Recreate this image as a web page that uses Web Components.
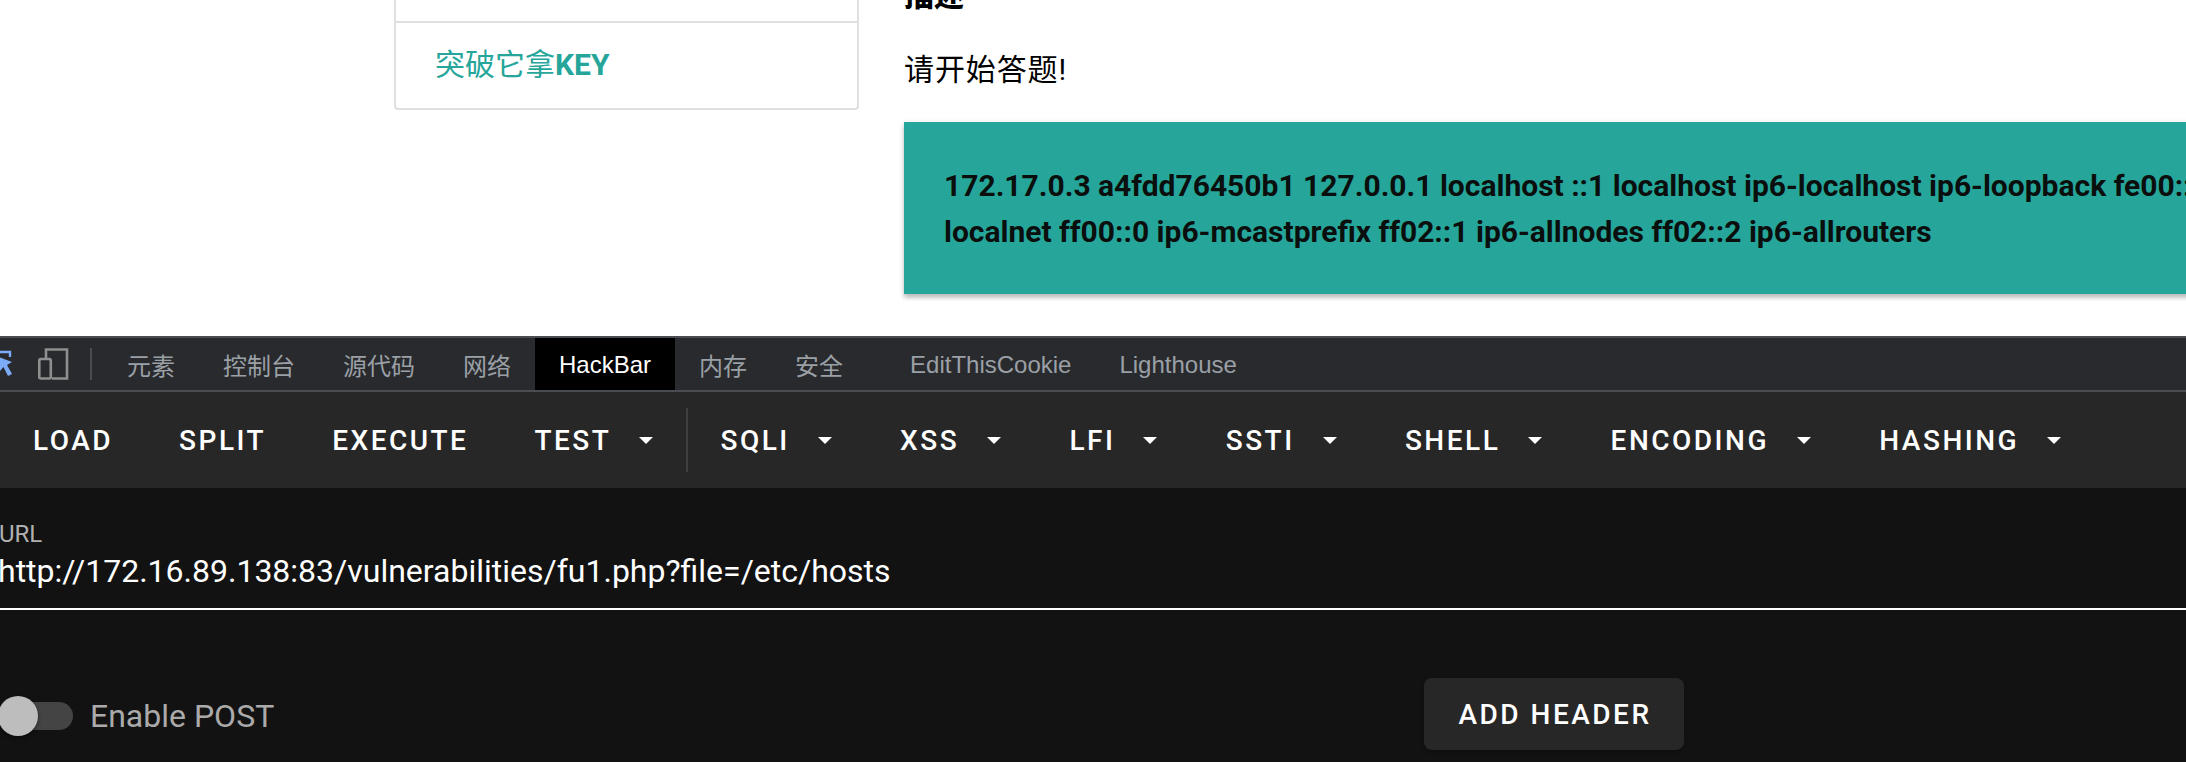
<!DOCTYPE html>
<html lang="zh"><head><meta charset="utf-8"><title>HackBar</title>
<style>
html,body{margin:0;padding:0;width:2186px;height:762px;overflow:hidden;background:#fff}
body{display:flex;flex-direction:column;font-family:Roboto,"Noto Sans CJK SC",sans-serif}
</style></head><body>
<site-area>
  <side-menu><span>突破它拿<b>KEY</b></span></side-menu>
  <task-panel>
    <strong slot="title">描述</strong>
    <span slot="lead">请开始答题!</span>
    172.17.0.3 a4fdd76450b1 127.0.0.1 localhost ::1 localhost ip6-localhost ip6-loopback fe00::0 ip6-<br>localnet ff00::0 ip6-mcastprefix ff02::1 ip6-allnodes ff02::2 ip6-allrouters
  </task-panel>
</site-area>
<dev-tools>
  <dev-tabs></dev-tabs>
  <hack-toolbar>
    <hack-btn>LOAD</hack-btn><hack-btn>SPLIT</hack-btn><hack-btn>EXECUTE</hack-btn><hack-btn menu>TEST</hack-btn>
    <tool-sep></tool-sep>
    <hack-btn menu wide>SQLI</hack-btn><hack-btn menu wide>XSS</hack-btn><hack-btn menu wide>LFI</hack-btn><hack-btn menu wide>SSTI</hack-btn><hack-btn menu wide>SHELL</hack-btn><hack-btn menu wide>ENCODING</hack-btn><hack-btn menu wide>HASHING</hack-btn>
  </hack-toolbar>
  <hack-form></hack-form>
</dev-tools>
<script>
function def(name, html, init){
  customElements.define(name, class extends HTMLElement{
    constructor(){super();this.attachShadow({mode:'open'}).innerHTML=html;}
    connectedCallback(){if(init)init(this);}
  });
}
def('site-area',`<style>
:host{display:flex;height:336px;flex:none;overflow:hidden;background:#fff;padding-left:394px;box-sizing:border-box;align-items:flex-start;color:#000}
</style><slot></slot>`);
def('side-menu',`<style>
:host{display:block;width:465px;flex:none;margin-right:45px;box-sizing:border-box;border:2px solid #e0e0e0;border-top:0;border-radius:0 0 4px 4px;color:#26a69a;font-size:30px;line-height:45px}
.a{height:21px;border-bottom:2px solid #e0e0e0}
.b{height:85px;box-sizing:border-box;padding:0 0 2px 39px;display:flex;align-items:center}
</style><div class="a"></div><div class="b"><slot></slot></div>`);
def('task-panel',`<style>
:host{display:block;width:1400px;flex:none;font-size:30px;line-height:45px;margin-top:-27px}
.t{display:block;height:66px;font-weight:700}
.l{display:block;height:75px;padding-top:8px;box-sizing:content-box;letter-spacing:.9px}
.box{background:#26a69a;padding:41px 40px 40px;line-height:46px;font-weight:700;color:#0a0f0e;box-shadow:0 4px 4px rgba(0,0,0,.2),0 1px 6px rgba(0,0,0,.12);white-space:nowrap;height:91px}
</style><div class="t"><slot name="title"></slot></div><div class="l"><slot name="lead"></slot></div><div class="box"><slot></slot></div>`);
def('dev-tools',`<style>:host{display:flex;flex-direction:column;flex:1;background:#121212;overflow:hidden}</style><slot></slot>`);
def('dev-tabs',`<style>
:host{display:flex;flex:none;height:52px;background:#292a2d;border-top:2px solid #494c50;border-bottom:2px solid #494c50;font:24px "Liberation Sans","Noto Sans CJK SC",sans-serif;color:#9aa0a6;align-items:stretch}
.ic{width:103px;flex:none;display:block}
.t{padding:1px 24px 0;display:flex;align-items:center;white-space:nowrap}
.on{background:#000;color:#fff}
.x{margin-left:19px}
</style>
<svg class="ic" width="103" height="52" viewBox="0 0 103 52" aria-hidden="true">
  <path d="M-4 14H10V19" fill="none" stroke="#7cacf8" stroke-width="2.4"/>
  <path d="M-1 19L12 24L7 27L12 36L8 38L3.500 29L0 33Z" fill="#7cacf8"/>
  <path d="M46 20V11.500H67V40.500H52" fill="none" stroke="#8f8f8f" stroke-width="2.600"/>
  <rect x="39.300" y="21" width="11.500" height="19.500" rx="1.500" fill="none" stroke="#8f8f8f" stroke-width="2.600"/>
  <rect x="90" y="10" width="2" height="32" fill="#494c50"/>
</svg>
<div class="t">元素</div><div class="t">控制台</div><div class="t">源代码</div><div class="t">网络</div><div class="t on">HackBar</div><div class="t">内存</div><div class="t">安全</div><div class="t x">EditThisCookie</div><div class="t">Lighthouse</div>`);
def('hack-toolbar',`<style>
:host{display:flex;flex:none;height:96px;background:#272727;align-items:center;box-sizing:border-box}
</style><slot></slot>`);
def('hack-btn',`<style>
:host{display:flex;flex:none;align-items:center;height:72px;padding:0 33px;font:500 28px Roboto,sans-serif;letter-spacing:2.5px;color:#fff;white-space:nowrap}
:host([wide]){padding:0 33.65px}
.c{display:none;width:0;height:0;border-left:7px solid transparent;border-right:7px solid transparent;border-top:7px solid #fff;margin-left:28px;margin-right:1px}
:host([menu]) .c{display:block}
</style><slot></slot><i class="c"></i>`);
def('tool-sep',`<style>:host{display:block;flex:none;width:2px;height:64px;background:#3f3f3f;margin:0 -1.5px 0 -1px}</style>`);
def('hack-form',`<style>
:host{display:block;flex:1;background:#121212;position:relative;font-family:Roboto,sans-serif;overflow:hidden}
.f{height:122px;box-sizing:border-box;border-bottom:2px solid #fff;margin-left:-1px;padding-top:32px}
.lab{font-size:24px;line-height:28px;color:#b0b0b0}
.val{font-size:32px;line-height:48px;color:#fff;margin:-1px 0 0 -1px}
.row{display:flex;align-items:center;margin-top:68px;height:72px}
.left{width:1424px;display:flex;align-items:center;flex:none;margin-top:4px}
.sw{width:73px;height:40px;position:relative;flex:none;margin-left:-2px;margin-right:19px}
.tr{display:block;margin:6px 0 0 20px;width:55px;height:28px;border-radius:0 14px 14px 0;background:#444}
.th{position:absolute;left:0;top:0;width:40px;height:40px;border-radius:50%;background:#bdbdbd;box-shadow:0 2px 4px rgba(0,0,0,.4)}
.en{font-size:32px;color:#aaa}
.add{width:260px;height:72px;box-sizing:border-box;padding-left:2px;border-radius:8px;background:#272727;color:#fff;display:flex;align-items:center;justify-content:center;font-weight:500;font-size:28px;letter-spacing:2.5px;box-shadow:0 3px 2px -2px rgba(0,0,0,.2),0 2px 4px rgba(0,0,0,.14)}
</style>
<div class="f"><div class="lab">URL</div><div class="val">http://172.16.89.138:83/vulnerabilities/fu1.php?file=/etc/hosts</div></div>
<div class="row"><div class="left"><div class="sw"><span class="tr"></span><span class="th"></span></div><span class="en">Enable POST</span></div><div class="add">ADD HEADER</div></div>`);
</script>
</body></html>
